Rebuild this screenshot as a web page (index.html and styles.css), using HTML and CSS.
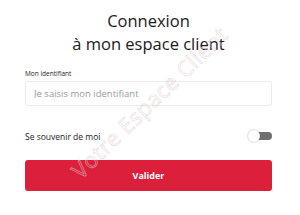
FILE: index.html
```html
<!DOCTYPE html>
<html lang="fr">
<head>
<meta charset="utf-8">
<link rel="stylesheet" href="styles.css">
</head>
<body>
<main class="page">
  <h1 class="title">Connexion<br>à mon espace client</h1>
  <form class="form">
    <label class="label" for="id">Mon identifiant</label>
    <input class="input" id="id" type="text" placeholder="Je saisis mon identifiant">
    <div class="remember">
      <span class="remember-text">Se souvenir de moi</span>
      <span class="toggle"><span class="knob"></span></span>
    </div>
    <button class="btn" type="button">Valider</button>
  </form>
  <div class="watermark">Votre Espace Client</div>
</main>
</body>
</html>
```
FILE: styles.css
```css
html, body {
  margin: 0;
  padding: 0;
  background: #fff;
}
.page {
  position: relative;
  width: 300px;
  height: 215px;
  overflow: hidden;
  font-family: "Open Sans", "Liberation Sans", sans-serif;
  color: #222;
  box-sizing: border-box;
  padding: 9px 28px 0 25px;
}
.title {
  margin: 0;
  text-align: center;
  font-family: "Open Sans", sans-serif;
  font-weight: 400;
  font-size: 16.5px;
  line-height: 23px;
  color: #1a1a1a;
}
.form {
  display: flex;
  flex-direction: column;
  margin-top: 14px;
}
.label {
  font-size: 6.5px;
  line-height: 9px;
  color: #222;
}
.input {
  margin-top: 3px;
  height: 25px;
  box-sizing: border-box;
  border: 1px solid #ececec;
  border-radius: 2px;
  padding: 0 8px;
  font-family: "Open Sans", sans-serif;
  font-size: 9.5px;
  outline: none;
}
.input::placeholder {
  color: #9a9a9a;
}
.remember {
  display: flex;
  align-items: center;
  justify-content: space-between;
  margin-top: 24px;
  height: 12px;
}
.remember-text {
  font-size: 8.5px;
  color: #222;
}
.toggle {
  position: relative;
  width: 24px;
  height: 10px;
  display: flex;
  justify-content: flex-end;
}
.toggle::before {
  content: "";
  width: 16px;
  height: 8px;
  margin-top: 1px;
  border-radius: 4px;
  background: #6f6f6f;
}
.knob {
  position: absolute;
  left: 0;
  top: -1px;
  width: 12px;
  height: 12px;
  border-radius: 50%;
  background: #fff;
  box-shadow: 0 0 2px rgba(0,0,0,0.35);
}
.btn {
  margin-top: 18px;
  height: 31px;
  border: 0;
  border-radius: 3px;
  background: #dc1f3a;
  color: #fff;
  font-family: "Open Sans", sans-serif;
  font-weight: 700;
  font-size: 9px;
}
.watermark {
  position: absolute;
  left: 149px;
  top: 102px;
  transform: translate(-50%, -50%) rotate(-44deg);
  white-space: nowrap;
  font-family: "Open Sans", sans-serif;
  font-size: 22px;
  letter-spacing: 0.5px;
  color: transparent;
  -webkit-text-stroke: 0.6px rgba(225, 205, 205, 0.75);
}
```
